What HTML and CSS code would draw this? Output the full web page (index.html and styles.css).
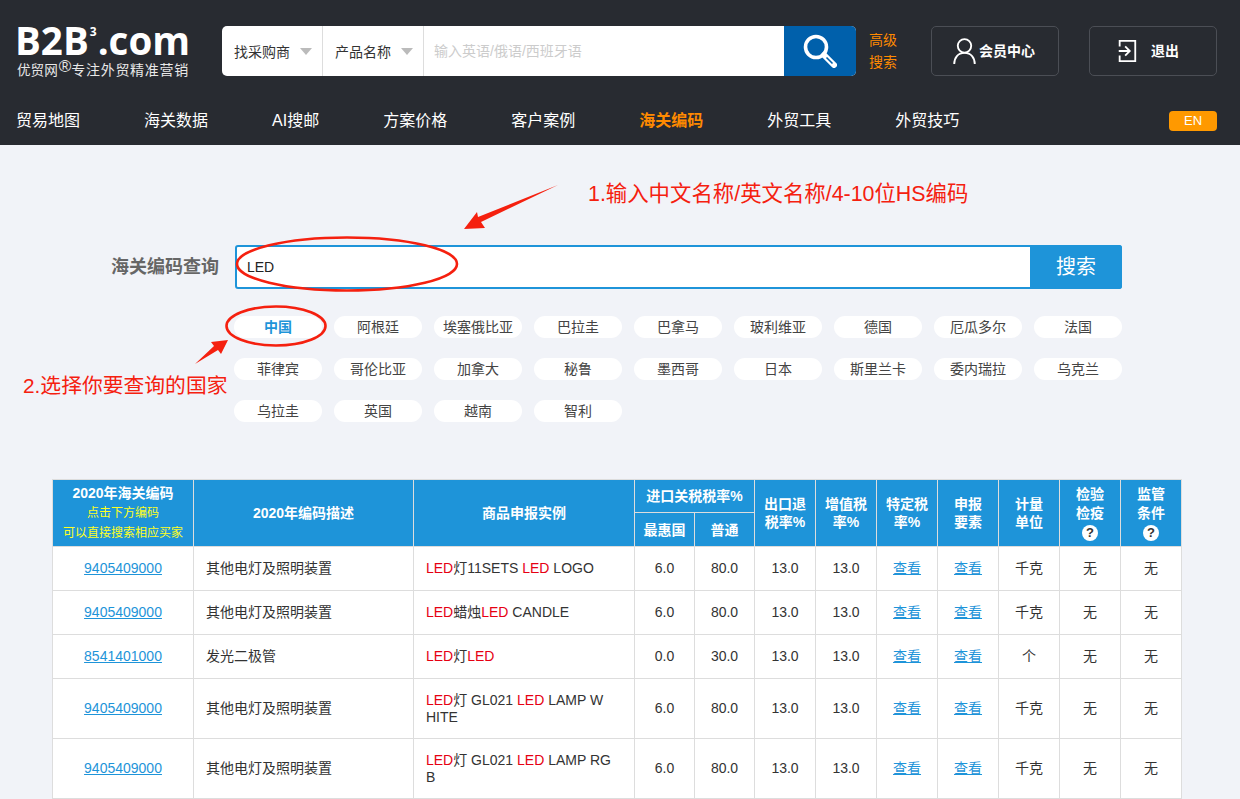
FILE: index.html
```html
<!DOCTYPE html>
<html lang="zh-CN">
<head>
<meta charset="utf-8">
<title>海关编码查询</title>
<link rel="stylesheet" href="styles.css">
</head>
<body>
<header class="site-header">
  <div class="top-row">
    <a class="logo">
      <span class="logo-main">B2B<sup class="logo-sup">3</sup>.com</span>
      <span class="logo-sub">优贸网<sup class="logo-reg">®</sup><span class="logo-tag">专注外贸精准营销</span></span>
    </a>
    <div class="top-search">
      <div class="select"><span>找采购商</span><i class="caret"></i></div>
      <div class="select"><span>产品名称</span><i class="caret"></i></div>
      <div class="placeholder">输入英语/俄语/西班牙语</div>
      <div class="search-btn">
        <svg width="34" height="34" viewBox="0 0 34 34"><circle cx="13" cy="13" r="10.5" fill="none" stroke="#fff" stroke-width="3.6"/><path d="M21 21l10 10" stroke="#fff" stroke-width="6" stroke-linecap="round"/><path d="M23.5 23.5l6 6" stroke="#0060ab" stroke-width="1.6"/></svg>
      </div>
    </div>
    <a class="advanced">高级<br>搜索</a>
    <a class="head-btn member">
      <svg width="25" height="28" viewBox="0 0 26 30"><circle cx="13" cy="9.5" r="7.2" fill="none" stroke="#fff" stroke-width="2"/><path d="M2 29c0-7 4-12 11-12s11 5 11 12" fill="none" stroke="#fff" stroke-width="2"/></svg>
      <span>会员中心</span>
    </a>
    <a class="head-btn logout">
      <svg width="20" height="22" viewBox="0 0 20 24"><path d="M2 7V1h17v22H2v-6" fill="none" stroke="#fff" stroke-width="2"/><path d="M1 12h11M8 7l5 5-5 5" fill="none" stroke="#fff" stroke-width="2"/></svg>
      <span>退出</span>
    </a>
  </div>
  <nav class="nav">
    <a>贸易地图</a><a>海关数据</a><a>AI搜邮</a><a>方案价格</a><a>客户案例</a><a class="active">海关编码</a><a>外贸工具</a><a>外贸技巧</a>
    <span class="en">EN</span>
  </nav>
</header>

<main class="main">
  <form class="query">
    <label class="query-label">海关编码查询</label>
    <div class="query-box">
      <div class="query-input">LED</div>
      <div class="query-btn">搜索</div>
    </div>
  </form>
  <div class="countries">
    <a class="pill on">中国</a><a class="pill">阿根廷</a><a class="pill">埃塞俄比亚</a><a class="pill">巴拉圭</a><a class="pill">巴拿马</a><a class="pill">玻利维亚</a><a class="pill">德国</a><a class="pill">厄瓜多尔</a><a class="pill">法国</a>
    <a class="pill">菲律宾</a><a class="pill">哥伦比亚</a><a class="pill">加拿大</a><a class="pill">秘鲁</a><a class="pill">墨西哥</a><a class="pill">日本</a><a class="pill">斯里兰卡</a><a class="pill">委内瑞拉</a><a class="pill">乌克兰</a>
    <a class="pill">乌拉圭</a><a class="pill">英国</a><a class="pill">越南</a><a class="pill">智利</a>
  </div>

  <table class="codes">
    <colgroup>
      <col class="c1"><col class="c2"><col class="c3"><col class="c5"><col class="c5"><col class="c4"><col class="c4"><col class="c4"><col class="c4"><col class="c4"><col class="c4"><col class="c4">
    </colgroup>
    <thead>
      <tr>
        <th rowspan="2" class="lead">2020年海关编码<br><em>点击下方编码</em><br><em>可以直接搜索相应买家</em></th>
        <th rowspan="2">2020年编码描述</th>
        <th rowspan="2">商品申报实例</th>
        <th colspan="2">进口关税税率%</th>
        <th rowspan="2">出口退<br>税率%</th>
        <th rowspan="2">增值税<br>率%</th>
        <th rowspan="2">特定税<br>率%</th>
        <th rowspan="2">申报<br>要素</th>
        <th rowspan="2">计量<br>单位</th>
        <th rowspan="2" class="tight">检验<br>检疫<br><i class="q">?</i></th>
        <th rowspan="2" class="tight">监管<br>条件<br><i class="q">?</i></th>
      </tr>
      <tr class="sub-head"><th>最惠国</th><th>普通</th></tr>
    </thead>
    <tbody>
      <tr class="r44"><td class="code"><a>9405409000</a></td><td class="text">其他电灯及照明装置</td><td class="text"><b>LED</b>灯11SETS <b>LED</b> LOGO</td><td>6.0</td><td>80.0</td><td>13.0</td><td>13.0</td><td><a>查看</a></td><td><a>查看</a></td><td>千克</td><td>无</td><td>无</td></tr>
      <tr class="r44"><td class="code"><a>9405409000</a></td><td class="text">其他电灯及照明装置</td><td class="text"><b>LED</b>蜡烛<b>LED</b> CANDLE</td><td>6.0</td><td>80.0</td><td>13.0</td><td>13.0</td><td><a>查看</a></td><td><a>查看</a></td><td>千克</td><td>无</td><td>无</td></tr>
      <tr class="r44"><td class="code"><a>8541401000</a></td><td class="text">发光二极管</td><td class="text"><b>LED</b>灯<b>LED</b></td><td>0.0</td><td>30.0</td><td>13.0</td><td>13.0</td><td><a>查看</a></td><td><a>查看</a></td><td>个</td><td>无</td><td>无</td></tr>
      <tr class="r60"><td class="code"><a>9405409000</a></td><td class="text">其他电灯及照明装置</td><td class="text"><b>LED</b>灯 GL021 <b>LED</b> LAMP W<br>HITE</td><td>6.0</td><td>80.0</td><td>13.0</td><td>13.0</td><td><a>查看</a></td><td><a>查看</a></td><td>千克</td><td>无</td><td>无</td></tr>
      <tr class="r60"><td class="code"><a>9405409000</a></td><td class="text">其他电灯及照明装置</td><td class="text"><b>LED</b>灯 GL021 <b>LED</b> LAMP RG<br>B</td><td>6.0</td><td>80.0</td><td>13.0</td><td>13.0</td><td><a>查看</a></td><td><a>查看</a></td><td>千克</td><td>无</td><td>无</td></tr>
    </tbody>
  </table>

  <p class="note note-1">1.输入中文名称/英文名称/4-10位HS编码</p>
  <p class="note note-2">2.选择你要查询的国家</p>
  <svg class="marks" width="1240" height="654" viewBox="0 145 1240 654">
    <polygon points="558,185 481,222 485,228 464,229 477,212 478,217" fill="#f5200f"/>
    <ellipse cx="347" cy="264" rx="110" ry="26.5" fill="none" stroke="#f5200f" stroke-width="2.6"/>
    <ellipse cx="276" cy="326" rx="49.5" ry="19.5" fill="none" stroke="#f5200f" stroke-width="2.6"/>
    <polygon points="195,364 214,346 211,342 228,340 221,354 218,350" fill="#f5200f"/>
  </svg>
</main>
</body>
</html>
```

FILE: styles.css
```css
* { box-sizing: border-box; }
html, body { margin: 0; padding: 0; }
body {
  background: #f1f3f8;
  color: #333;
  font-family: "Liberation Sans", "Noto Sans CJK SC", sans-serif;
  font-size: 14px;
  height: 799px;
  overflow: hidden;
}
a { color: inherit; text-decoration: none; }

.site-header { background: #282b31; height: 145px; padding: 26px 23px 0 16px; }
.top-row { display: flex; align-items: flex-start; height: 50px; }

.logo { display: block; width: 206px; color: #fff; margin-top: -6px; }
.logo-main { display: block; font-family: "Open Sans", sans-serif; font-weight: 700; font-size: 38.5px; line-height: 40px; height: 40px; white-space: nowrap; margin-left: -1px; }
.logo-sup { font-size: 12px; line-height: 0; vertical-align: 19px; margin: 0 1px; }
.logo-sub { display: block; font-size: 13.6px; line-height: 20px; margin: 0 0 0 1px; color: #e8e8e8; white-space: nowrap; }
.logo-reg { font-size: 17px; line-height: 0; vertical-align: 3px; margin-left: 1px; }
.logo-tag { font-size: 14px; letter-spacing: .7px; }

.top-search { display: flex; width: 634px; height: 50px; background: #fff; border-radius: 5px; overflow: hidden; }
.select { width: 101px; border-right: 1px solid #ddd; display: flex; align-items: center; padding-left: 12px; font-size: 14px; color: #333; }
.caret { width: 0; height: 0; border: 6px solid transparent; border-top: 7px solid #bbb; border-bottom: 0; margin-left: 10px; }
.placeholder { flex: 1; padding-left: 10px; line-height: 50px; font-size: 14px; color: #ccc; }
.search-btn { width: 72px; background: #0060ab; display: flex; align-items: center; justify-content: center; }

.advanced { width: 75px; padding: 3px 0 0 13px; color: #ff8a00; font-size: 14px; line-height: 22px; }
.head-btn { width: 128px; height: 50px; border: 1px solid #4b4e55; border-radius: 5px; display: flex; align-items: center; color: #fff; font-weight: 700; font-size: 14px; line-height: 46px; }
.member { padding-left: 20px; gap: 2px; margin-right: 30px; }
.logout { padding-left: 27px; gap: 14px; }

.nav { display: flex; align-items: center; gap: 64px; margin-top: 35px; height: 20px; color: #fff; font-size: 16px; line-height: 18px; }
.nav .active { color: #ff8a00; font-weight: 700; }
.en { margin-left: auto; width: 48px; height: 20px; line-height: 20px; text-align: center; background: #ff9900; border-radius: 4px; font-size: 13px; }

.main { position: relative; padding: 100px 118px 0 52px; height: 654px; }
.query { display: flex; align-items: center; height: 44px; }
.query-label { width: 167px; text-align: right; font-size: 18px; font-weight: 700; color: #666; line-height: 22px; }
.query-box { margin-left: 16px; flex: 1; height: 44px; display: flex; background: #fff; border: 2px solid #1e94d9; border-radius: 3px; }
.query-input { flex: 1; padding-left: 10px; line-height: 41px; font-size: 14px; color: #222; }
.query-btn { width: 92px; margin: -2px -2px -2px 0; background: #1e94d9; color: #fff; text-align: center; font-size: 20px; line-height: 44px; border-radius: 0 3px 3px 0; }

.countries { display: grid; grid-template-columns: repeat(9, 88px); column-gap: 12px; row-gap: 20px; margin: 27px 0 57px 182px; }
.pill { height: 22px; line-height: 22px; background: #fff; border-radius: 11px; text-align: center; font-size: 14px; color: #444; white-space: nowrap; }
.pill.on { color: #1e94d9; font-weight: 700; }

.codes { border-collapse: collapse; table-layout: fixed; width: 1129px; background: #fff; }
.c1 { width: 141px; }
.c2 { width: 220px; }
.c3 { width: 221px; }
.c4 { width: 61px; }
.c5 { width: 60px; }
.codes th { background: #1e94d9; color: #fff; border: 1px solid #ddd; font-size: 14px; line-height: 18px; height: 33px; padding: 0; font-weight: 700; text-align: center; }
.sub-head th { height: 34px; }
.codes th.lead { line-height: 19px; }
.codes th em { font-style: normal; font-weight: 400; font-size: 12px; color: #ffff22; }
.codes th.tight { line-height: 18.5px; }
.q { display: inline-block; width: 16px; height: 16px; line-height: 16px; border-radius: 50%; background: #fff; color: #333; font-style: normal; font-size: 13px; font-weight: 700; vertical-align: middle; }
.codes td { border: 1px solid #ddd; text-align: center; padding: 0; font-size: 14px; line-height: 17px; color: #333; }
.codes td.text { text-align: left; padding-left: 12px; padding-right: 12px; }
.codes td a { color: #1e94d9; text-decoration: underline; }
.codes td b { font-weight: 400; color: #e60012; }
.r44 { height: 44px; }
.r60 { height: 60px; }

.note { position: absolute; margin: 0; color: #f5200f; line-height: 28px; white-space: nowrap; }
.note-1 { left: 588px; top: 35px; font-size: 21.4px; }
.note-2 { left: 23px; top: 227px; font-size: 20.8px; }
.marks { position: absolute; left: 0; top: 0; pointer-events: none; }
```
